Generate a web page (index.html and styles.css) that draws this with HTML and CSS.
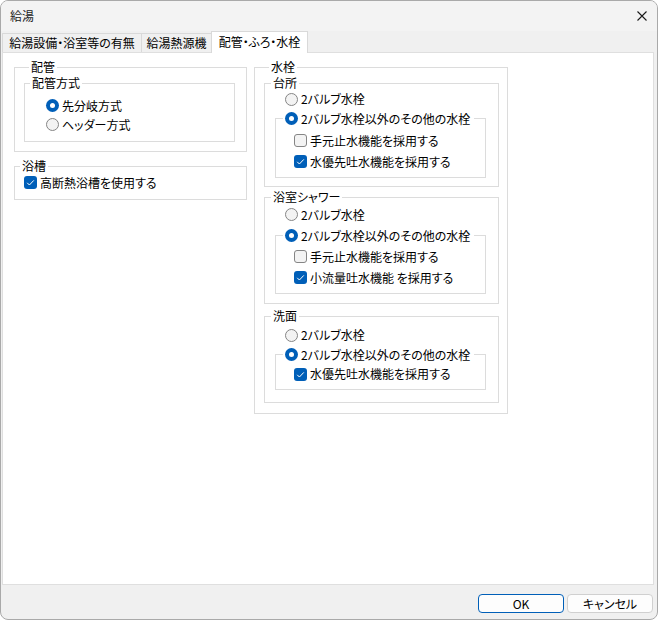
FILE: index.html
```html
<!DOCTYPE html>
<html lang="ja">
<head>
<meta charset="utf-8">
<title>給湯</title>
<link rel="stylesheet" href="styles.css">
</head>
<body>
<div class="window">
  <div class="titlebar">
    <span class="title">給湯</span>
    <svg class="close" width="10" height="10" viewBox="0 0 10 10"><path d="M0.5 0.5 L9.5 9.5 M9.5 0.5 L0.5 9.5" stroke="#1a1a1a" stroke-width="1.1" fill="none"/></svg>
  </div>
  <div class="tabs">
    <div class="tab t1">給湯設備・浴室等の有無</div>
    <div class="tab t2">給湯熱源機</div>
    <div class="tab t3 active">配管・ふろ・水栓</div>
  </div>
  <div class="panel">
    <div class="col col-left">
      <fieldset class="grp g-haikan">
        <legend>配管</legend>
        <fieldset class="grp g-hoshiki">
          <legend>配管方式</legend>
          <div class="row r19 ind21"><span class="radio on"></span><span>先分岐方式</span></div>
          <div class="row r19 ind21"><span class="radio"></span><span>ヘッダー方式</span></div>
        </fieldset>
      </fieldset>
      <fieldset class="grp g-yokuso">
        <legend>浴槽</legend>
        <div class="row r19 ind9"><span class="check on"><svg viewBox="0 0 13 13"><path d="M3.2 6.8 L5.4 9 L9.8 4.4" stroke="#fff" stroke-width="1" fill="none"/></svg></span><span>高断熱浴槽を使用する</span></div>
      </fieldset>
    </div>
    <div class="col col-right">
      <fieldset class="grp g-suisen">
        <legend>水栓</legend>
        <fieldset class="grp g-sub g-daidokoro">
          <legend>台所</legend>
          <div class="row r18 ind20"><span class="radio"></span><span>2バルブ水栓</span></div>
          <fieldset class="grp g-other g-other-d">
            <legend class="radio-legend"><span class="row r21"><span class="radio on"></span><span>2バルブ水栓以外のその他の水栓</span></span></legend>
            <div class="row r21 ind18"><span class="check"></span><span>手元止水機能を採用する</span></div>
            <div class="row r21 ind18"><span class="check on"><svg viewBox="0 0 13 13"><path d="M3.2 6.8 L5.4 9 L9.8 4.4" stroke="#fff" stroke-width="1" fill="none"/></svg></span><span>水優先吐水機能を採用する</span></div>
          </fieldset>
        </fieldset>
        <fieldset class="grp g-sub g-shower">
          <legend>浴室シャワー</legend>
          <div class="row r21 ind20"><span class="radio"></span><span>2バルブ水栓</span></div>
          <fieldset class="grp g-other">
            <legend class="radio-legend"><span class="row r21"><span class="radio on"></span><span>2バルブ水栓以外のその他の水栓</span></span></legend>
            <div class="row r21 ind18"><span class="check"></span><span>手元止水機能を採用する</span></div>
            <div class="row r21 ind18"><span class="check on"><svg viewBox="0 0 13 13"><path d="M3.2 6.8 L5.4 9 L9.8 4.4" stroke="#fff" stroke-width="1" fill="none"/></svg></span><span>小流量吐水機能 を採用する</span></div>
          </fieldset>
        </fieldset>
        <fieldset class="grp g-sub g-senmen">
          <legend>洗面</legend>
          <div class="row r20 ind20"><span class="radio"></span><span>2バルブ水栓</span></div>
          <fieldset class="grp g-other g-other-s">
            <legend class="radio-legend"><span class="row r19"><span class="radio on"></span><span>2バルブ水栓以外のその他の水栓</span></span></legend>
            <div class="row r20 ind18"><span class="check on"><svg viewBox="0 0 13 13"><path d="M3.2 6.8 L5.4 9 L9.8 4.4" stroke="#fff" stroke-width="1" fill="none"/></svg></span><span>水優先吐水機能を採用する</span></div>
          </fieldset>
        </fieldset>
      </fieldset>
    </div>
  </div>
  <div class="footer">
    <button class="btn default">OK</button>
    <button class="btn">キャンセル</button>
  </div>
</div>
</body>
</html>
```

FILE: styles.css
```css
* { box-sizing: border-box; }
html, body { margin: 0; padding: 0; background: #ffffff; }
body {
  font-family: "Noto Sans CJK JP", "Noto Sans", sans-serif;
  font-size: 12px;
  color: #000;
  font-feature-settings: "palt";
}
.window {
  width: 658px;
  height: 620px;
  background: #f0f0f0;
  border: 1px solid #a9a9a9;
  border-radius: 8px;
  overflow: hidden;
  display: flex;
  flex-direction: column;
}
.titlebar {
  height: 30px;
  flex: none;
  background: #f3f3f3;
  display: flex;
  align-items: center;
  justify-content: space-between;
  padding: 0 10px 0 9px;
}
.title { color: #1b1b1b; line-height: 14px; }
.close { display: block; }
.tabs {
  height: 21px;
  flex: none;
  display: flex;
  align-items: flex-end;
  padding-left: 1px;
  position: relative;
  z-index: 1;
}
.tab {
  height: 19px;
  line-height: 18px;
  border: 1px solid #d9d9d9;
  border-bottom: none;
  background: #f0f0f0;
  text-align: center;
  white-space: nowrap;
  margin-right: -1px;
}
.t1 { width: 140px; }
.t2 { width: 71px; }
.t3 { width: 97px; }
.tab.active {
  height: 22px;
  line-height: 20px;
  background: #ffffff;
  margin-bottom: -1px;
  position: relative;
}
.panel {
  flex: none;
  height: 533px;
  margin: 0 3px 0 1px;
  background: #ffffff;
  border: 1px solid #dfdfdf;
  padding: 7px 0 0 11px;
  display: flex;
  align-items: flex-start;
  gap: 7px;
}
.col { display: flex; flex-direction: column; }
.col-left { width: 233px; }
.col-right { width: 254px; }

fieldset.grp {
  margin: 0;
  padding: 0;
  border: 1px solid #dcdcdc;
  min-width: 0;
}
fieldset.grp > legend {
  margin-left: 5px;
  padding: 0 2px;
  line-height: 14px;
  height: 14px;
}
.g-haikan { padding: 2px 11px 9px 9px !important; }
.g-hoshiki { padding: 6px 0 7px 0 !important; }
.g-yokuso { margin-top: 7px !important; padding: 0 0 7px 0 !important; }

.g-suisen { padding: 2px 8px 10px 9px !important; }
.g-sub { padding: 0 12px 0 0 !important; }
.g-sub > legend { margin-left: 6px !important; }
.g-daidokoro { padding-bottom: 8px !important; }
.g-shower { margin-top: 3px !important; padding-bottom: 9px !important; }
.g-senmen { margin-top: 5px !important; padding: 2px 12px 12px 0 !important; }
.g-other { margin-left: 10px !important; padding-bottom: 5px !important; }
.g-other-d { padding-top: 1px !important; }
fieldset.g-other > legend.radio-legend {
  margin-left: 7px;
  padding: 0 4px 0 2px;
  height: auto;
  line-height: normal;
}

.row {
  display: flex;
  align-items: center;
  gap: 3px;
  white-space: nowrap;
  line-height: 14px;
}
.r18 { height: 18px; }
.r19 { height: 19px; }
.r20 { height: 20px; }
.r21 { height: 21px; }
.ind9 { padding-left: 9px; }
.ind18 { padding-left: 18px; }
.ind20 { padding-left: 20px; }
.ind21 { padding-left: 21px; }

.radio {
  flex: none;
  width: 13px;
  height: 13px;
  border-radius: 50%;
  border: 1px solid #858585;
  background: #f3f3f3;
  position: relative;
}
.radio.on {
  border: none;
  background: #005fb8;
}
.radio.on::after {
  content: "";
  position: absolute;
  left: 4px;
  top: 4px;
  width: 5px;
  height: 5px;
  border-radius: 50%;
  background: #ffffff;
}
.check {
  flex: none;
  width: 13px;
  height: 13px;
  border-radius: 3px;
  border: 1px solid #858585;
  background: #f3f3f3;
}
.check.on {
  border: none;
  background: #005fb8;
}
.check svg { display: block; width: 13px; height: 13px; }

.footer {
  flex: 1;
  display: flex;
  justify-content: flex-end;
  align-items: flex-start;
  gap: 3px;
  padding: 9px 4px 0 0;
}
.btn {
  font-family: inherit;
  font-size: 12px;
  font-feature-settings: "palt";
  width: 86px;
  height: 19px;
  padding: 0;
  line-height: 16px;
  background: #fdfdfd;
  border: 1px solid #d0d0d0;
  border-radius: 4px;
  color: #000;
}
.btn.default { border-color: #005fb8; }
```
